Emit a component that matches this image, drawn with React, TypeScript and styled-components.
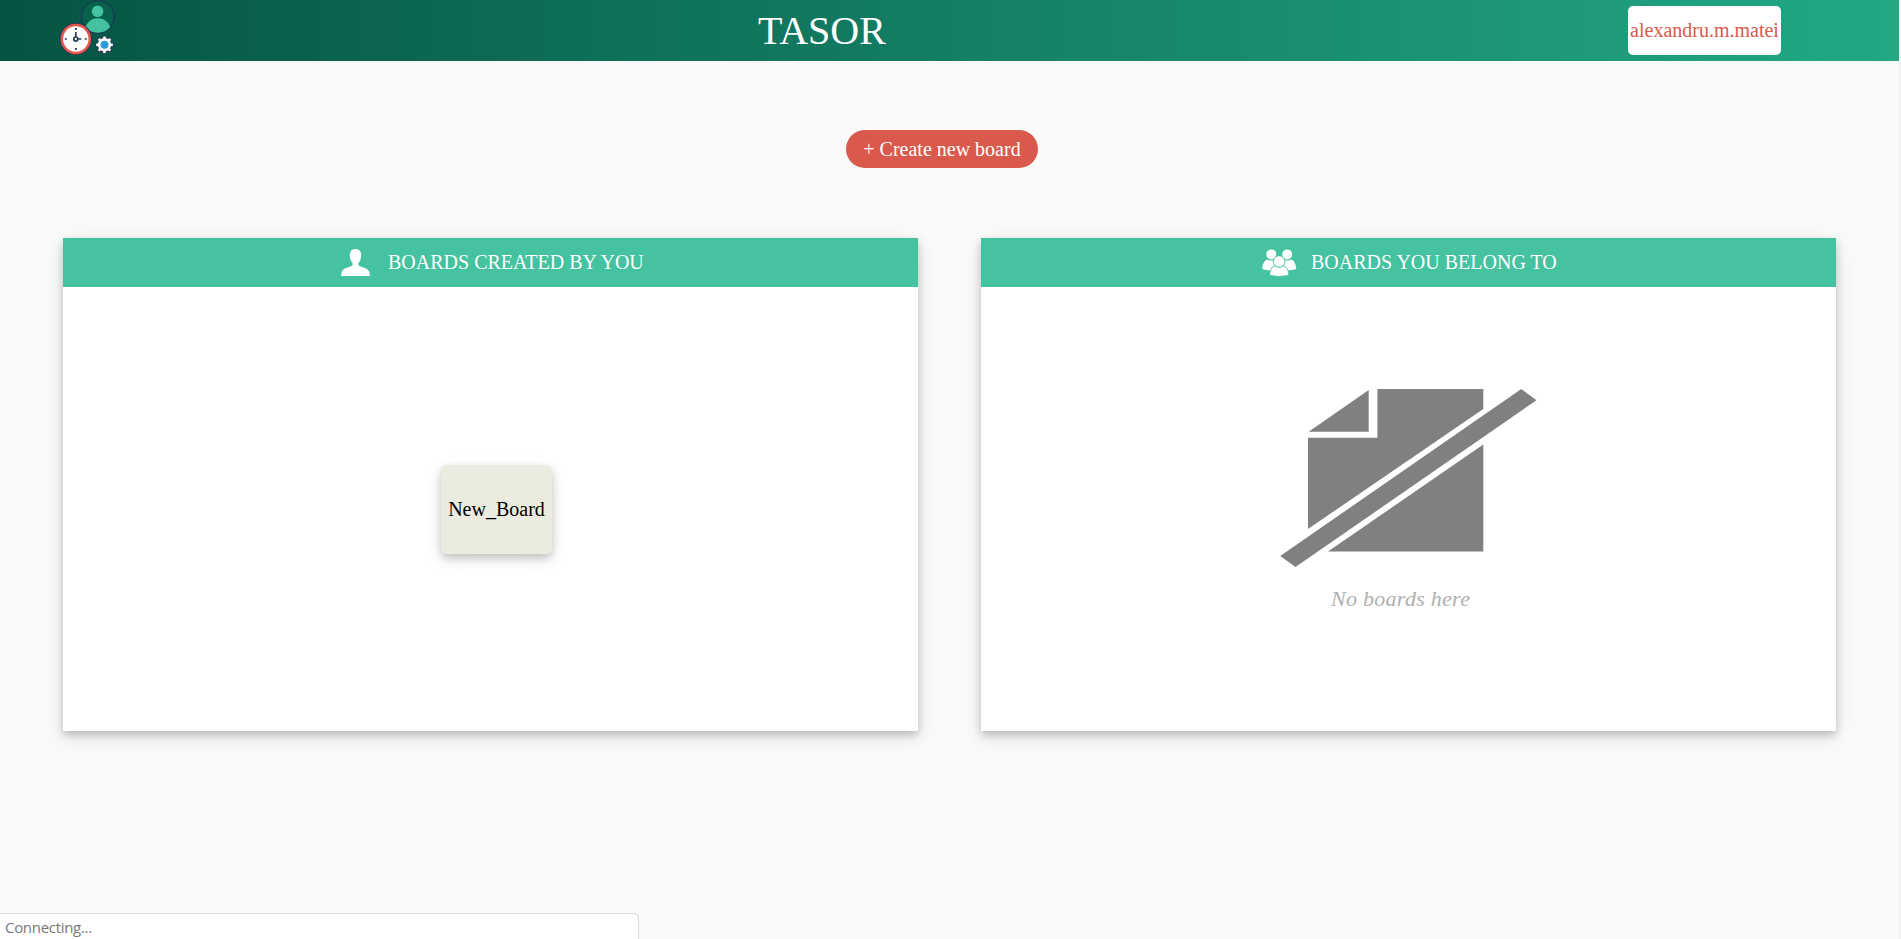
import React from 'react';
import styled, { createGlobalStyle } from 'styled-components';

const GlobalStyle = createGlobalStyle`
  * { box-sizing: border-box; }
  body { margin: 0; background: #fafafa; font-family: 'Liberation Serif', 'Times New Roman', serif; }
`;

const Page = styled.div`
  width: 100%;
  height: 939px;
  overflow: hidden;
  position: relative;
  border-right: 2px solid #f1f1f1;
`;

const Header = styled.header`
  display: grid;
  grid-template-columns: 698px 1fr 271px;
  align-items: center;
  height: 61px;
  color: #fff;
  background: linear-gradient(to right, #055443, #22a884);
`;

const Logo = styled.svg`
  display: block;
  width: 100px;
  height: 61px;
  margin-left: 40px;
`;

const Title = styled.h1`
  margin: 0 0 0 60px;
  font-size: 40px;
  font-weight: 400;
  line-height: 47px;
`;

const UserButton = styled.button`
  width: 153px;
  height: 49px;
  padding: 0;
  border: 0;
  border-radius: 5px;
  background: #fff;
  color: #d9594c;
  font: 20px 'Liberation Serif', serif;
  white-space: nowrap;
`;

const Main = styled.main`
  display: flex;
  flex-direction: column;
  padding: 69px 63px 0;
`;

const CreateButton = styled.button`
  align-self: flex-start;
  width: 192px;
  height: 38px;
  margin-left: 783px;
  padding: 0;
  border: 0;
  border-radius: 19px;
  background: #d9594c;
  color: #fff;
  font: 20px 'Liberation Serif', serif;
  white-space: nowrap;
`;

const Panels = styled.div`
  display: grid;
  grid-template-columns: 855px 855px;
  gap: 63px;
  margin-top: 70px;
`;

const Panel = styled.section`
  display: flex;
  flex-direction: column;
  height: 493px;
  background: #fff;
  box-shadow: 0 4px 8px rgba(0, 0, 0, 0.2), 0 6px 20px rgba(0, 0, 0, 0.1);
`;

const PanelHeader = styled.div<{ $inset: number; $gap: number }>`
  display: flex;
  align-items: center;
  height: 49px;
  padding-left: ${(p) => p.$inset}px;
  gap: ${(p) => p.$gap}px;
  background: #45c2a0;
  color: #fff;
  font-size: 20px;
  line-height: 23px;
  white-space: nowrap;
`;

const PanelBody = styled.div<{ $top: number }>`
  display: flex;
  flex-direction: column;
  padding-top: ${(p) => p.$top}px;
`;

const BoardCard = styled.div`
  display: flex;
  align-items: center;
  justify-content: center;
  width: 111px;
  height: 89px;
  margin-left: 378px;
  border-radius: 6px;
  background: #ebebdf;
  color: #000;
  font-size: 20px;
  box-shadow: 0 4px 8px rgba(0, 0, 0, 0.2), 0 6px 20px rgba(0, 0, 0, 0.08);
`;

const EmptyArt = styled.svg`
  display: block;
  width: 260px;
  height: 180px;
  margin-left: 298px;
`;

const EmptyText = styled.p`
  margin: 18px 0 0 350px;
  color: #b0b0b0;
  font: italic 22px/26px 'Liberation Serif', serif;
  letter-spacing: 0.28px;
`;

const StatusBar = styled.div`
  position: absolute;
  left: 0;
  bottom: 0;
  width: 639px;
  height: 26px;
  padding-left: 5px;
  border: 1px solid #d8d8d8;
  border-width: 1px 1px 0 0;
  border-top-right-radius: 5px;
  background: #fff;
  color: #777;
  font: 15px/27px 'Open Sans', sans-serif;
  letter-spacing: -0.3px;
`;

const gearTeeth = [0, 45, 90, 135, 180, 225, 270, 315];

const BrandLogo = () => (
  <Logo viewBox="0 0 100 61">
    <circle cx="57.8" cy="16.8" r="16.3" fill="#07614b" stroke="#163f50" strokeWidth="1.6" />
    <circle cx="57.6" cy="11.3" r="5.8" fill="#45c2a0" />
    <path d="M45.3 27C48 21.500 52 18.300 57.800 18.300S68 21.500 70.200 27C67.500 30.500 63 32.700 57.800 32.700S48 30.500 45.300 27Z" fill="#45c2a0" />
    <g transform="translate(13.300 0)">
      <circle cx="22.500" cy="39" r="16.200" fill="#263a55" />
      <circle cx="22.500" cy="39" r="15.200" fill="#e9574c" />
      <circle cx="22.500" cy="39" r="12.700" fill="#fff" />
      <g fill="none" stroke="#263a55" strokeWidth="1.700">
        <path d="M22.500 32v5M24.500 39H28" />
        <circle cx="22.500" cy="39" r="2" />
        <path d="M22.500 28v2M22.500 48v2M11.500 39h2M31.500 39h2" />
      </g>
    </g>
    <g stroke="#263a55" strokeWidth="4.400">
      {gearTeeth.map((a) => <path key={a} d="M64.500 39.500v-4" transform={`rotate(${a} 64.500 44.800)`} />)}
    </g>
    <circle cx="64.500" cy="44.800" r="7.600" fill="#263a55" />
    <g stroke="#fff" strokeWidth="2.600">
      {gearTeeth.map((a) => <path key={a} d="M64.500 40v-3.500" transform={`rotate(${a} 64.500 44.800)`} />)}
    </g>
    <circle cx="64.500" cy="44.800" r="6.700" fill="#fff" />
    <circle cx="64.500" cy="44.800" r="4" fill="#2d9cdb" />
  </Logo>
);

const PersonIcon = () => (
  <svg width="29" height="27" viewBox="0 0 29 27" fill="#fff">
    <path d="M14.500 0C10.800 0 8.600 2.400 8.800 6.500C9 10 10 12.500 11.600 14V16C10.500 18 2.500 18.500.8 22.500L0 27H29L28.200 22.500C26.500 18.500 18.500 18 17.400 16V14C19 12.500 20 10 20.200 6.500C20.400 2.400 18.200 0 14.500 0Z" />
  </svg>
);

const GroupIcon = () => (
  <svg width="35" height="28" viewBox="0 0 35 28" fill="#fff">
    <circle cx="9.300" cy="5.400" r="5" />
    <circle cx="25.200" cy="5.400" r="5" />
    <path d="M.2 20C.5 15 2.500 11.500 5 10.500Q9 12.500 13.500 10.500L15 20.500Q7 22.500.2 20ZM34.300 20C34 15 32 11.500 29.500 10.500Q25.500 12.500 21 10.500L19.500 20.500Q27 22.500 34.300 20Z" />
    <g stroke="#45c2a0" strokeWidth=".9">
      <path d="M7.500 26.300C7.800 21.500 9.500 18.500 12.500 16.700Q17.200 19.500 22 16.700C25 18.500 26.700 21.500 27 26.300Q17 28.800 7.500 26.300Z" />
      <circle cx="17.200" cy="12.500" r="5.800" />
    </g>
  </svg>
);

export default function App() {
  return (
    <Page>
      <GlobalStyle />
      <Header>
        <BrandLogo />
        <Title>TASOR</Title>
        <UserButton>alexandru.m.matei</UserButton>
      </Header>
      <Main>
        <CreateButton>+ Create new board</CreateButton>
        <Panels>
          <Panel>
            <PanelHeader $inset={278} $gap={18}>
              <PersonIcon />
              <span>BOARDS CREATED BY YOU</span>
            </PanelHeader>
            <PanelBody $top={178}>
              <BoardCard>New_Board</BoardCard>
            </PanelBody>
          </Panel>
          <Panel>
            <PanelHeader $inset={280.5} $gap={14.5}>
              <GroupIcon />
              <span>BOARDS YOU BELONG TO</span>
            </PanelHeader>
            <PanelBody $top={101}>
              <EmptyArt viewBox="0 0 260 180" fill="#808080">
                <path d="M29.700 43.800L89.700 2V43.800Z" />
                <path d="M98.400 1H204.300V21L29 141V49.700H98.400Z" />
                <path d="M204.300 56.500V163.500H49Z" />
                <path d="M242.300 1L257.500 12.200L16.500 179L1.200 168Z" />
              </EmptyArt>
              <EmptyText>No boards here</EmptyText>
            </PanelBody>
          </Panel>
        </Panels>
      </Main>
      <StatusBar>Connecting...</StatusBar>
    </Page>
  );
}
